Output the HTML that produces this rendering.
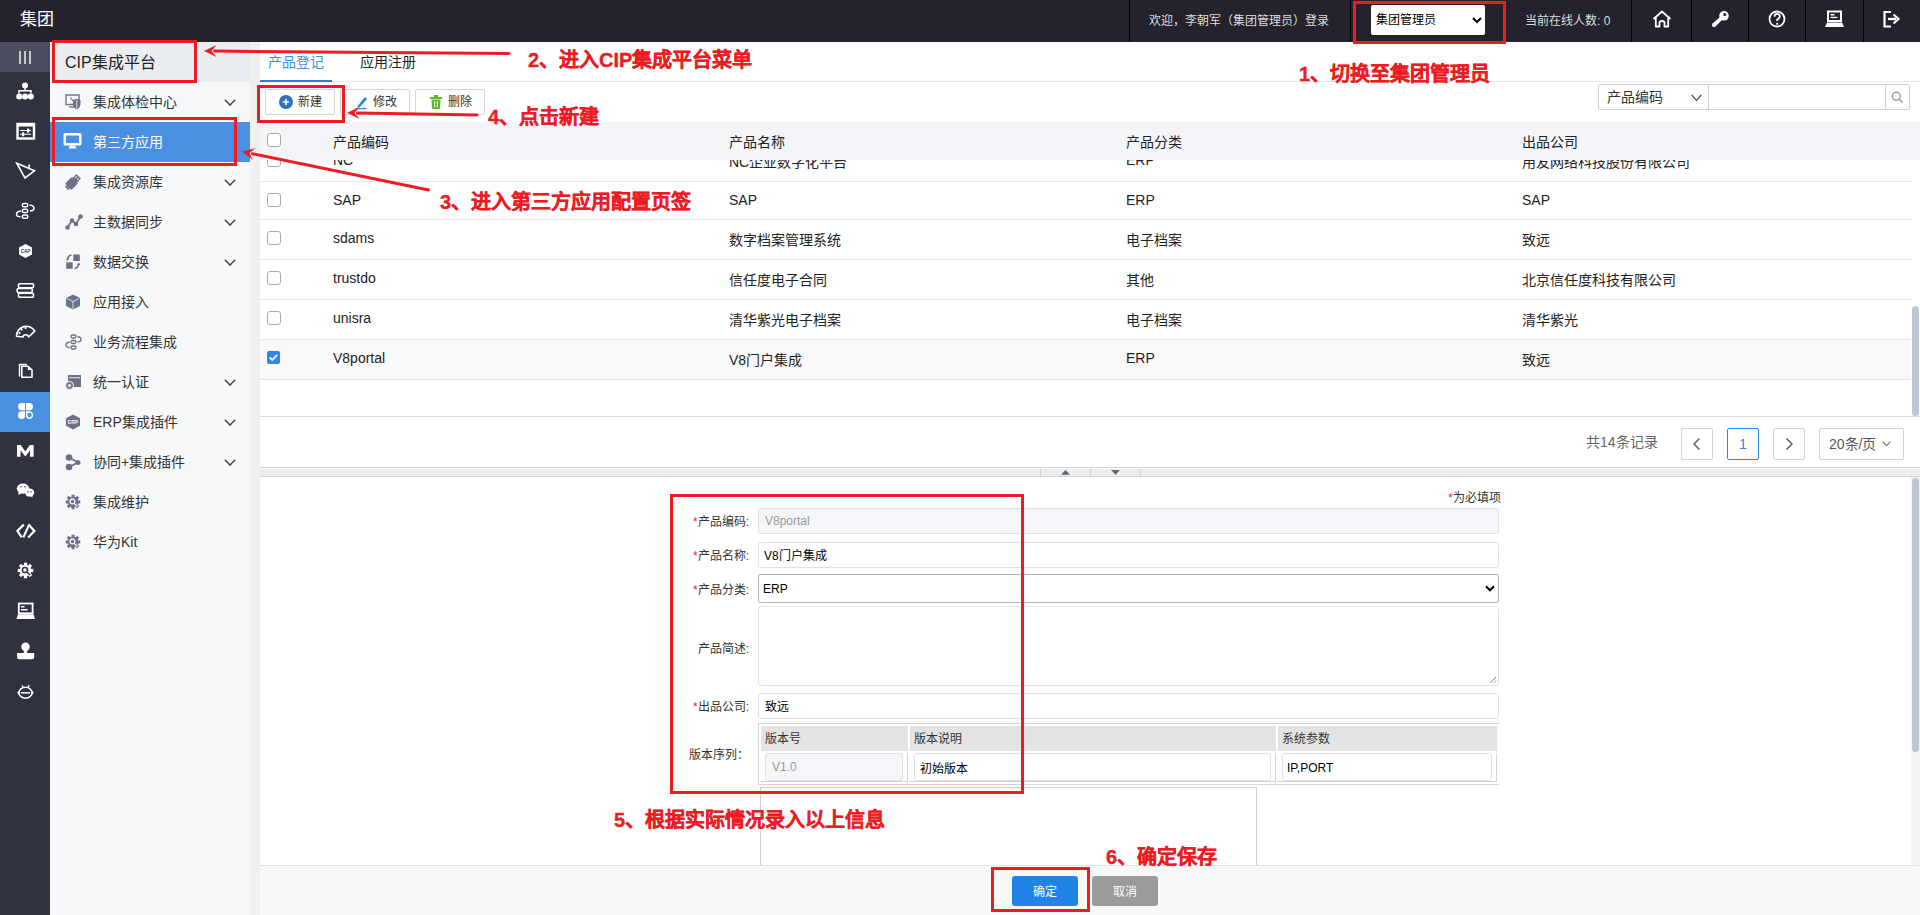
<!DOCTYPE html>
<html lang="zh-CN"><head><meta charset="utf-8">
<style>
*{box-sizing:border-box;margin:0;padding:0}
html,body{width:1920px;height:915px;overflow:hidden;background:#fff;font-family:"Liberation Sans",sans-serif;color:#333;position:relative}
.abs{position:absolute}
.t{position:absolute;white-space:nowrap;line-height:1}
#top{left:0;top:0;width:1920px;height:42px;background:#23222d}
#rail{left:0;top:42px;width:50px;height:873px;background:#30333f}
#side{left:50px;top:42px;width:200px;height:873px;background:#f7f8fa}
#strip{left:250px;top:42px;width:10px;height:873px;background:#f0f0f0}
.vsep{position:absolute;top:0;width:1px;height:42px;background:#000}
.red{color:#ed1c24;font-weight:bold;font-size:20px;-webkit-text-stroke:0.35px #ed1c24}
</style></head><body>
<div id="strip" class="abs"></div>
<div id="top" class="abs">
  <div class="t" style="left:20px;top:11px;font-size:17px;color:#fff">集团</div>
  <div class="vsep" style="left:1129px"></div>
  <div class="t" style="left:1149px;top:15px;font-size:12px;color:#ddd">欢迎，李朝军（集团管理员）登录</div>
  <div class="vsep" style="left:1350px"></div>
  <div class="abs" style="left:1371px;top:5px;width:114px;height:30px;background:#fff;border-radius:2px">
    <div class="t" style="left:5px;top:9px;font-size:12px;color:#000">集团管理员</div>
    <svg class="abs" style="left:101px;top:12px" width="10" height="7" viewBox="0 0 10 7"><path d="M1 1 L5 5 L9 1" fill="none" stroke="#000" stroke-width="2"/></svg>
  </div>
  <div class="t" style="left:1525px;top:15px;font-size:12px;color:#ddd">当前在线人数: 0</div>
  <div class="vsep" style="left:1631px"></div>
  <div class="vsep" style="left:1691px"></div>
  <div class="vsep" style="left:1748px"></div>
  <div class="vsep" style="left:1805px"></div>
  <div class="vsep" style="left:1863px"></div>
  <svg class="abs" style="left:0;top:0" width="1920" height="42">
    <g fill="none" stroke="#fff" stroke-width="1.8" stroke-linejoin="round">
      <!-- home -->
      <path d="M1653.5 19 L1662 11.5 L1670.5 19"/>
      <path d="M1655.8 17.5 V26.5 H1659.5 V22 Q1662 20 1664.5 22 V26.5 H1668.2 V17.5"/>
      <!-- help -->
      <circle cx="1777" cy="19" r="7.5"/>
      <path d="M1774.5 16.8 Q1774.5 13.8 1777 13.8 Q1779.8 13.8 1779.8 16.5 Q1779.8 18.2 1777.2 19.5 V21" stroke-width="1.8"/>
    </g>
    <circle cx="1777.2" cy="23.8" r="1.1" fill="#fff"/>
    <!-- key -->
    <g fill="#fff">
      <circle cx="1724" cy="15.8" r="4.8"/>
      <path d="M1720 17 L1722.5 19.5 L1715.5 26.5 Q1713.5 27.5 1712.5 26.5 Q1711.5 25.5 1712.5 23.5 Z"/>
    </g>
    <circle cx="1724.8" cy="14.5" r="1.5" fill="#23222d"/>
    <!-- monitor/laptop -->
    <path d="M1828 11.5 H1841 V21 H1828 Z" fill="none" stroke="#fff" stroke-width="2"/>
    <rect x="1830.5" y="14" width="4" height="1.5" fill="#fff"/>
    <rect x="1830.5" y="16.8" width="7" height="1.3" fill="#fff"/>
    <path d="M1827 22.5 H1842 L1844 27 H1825 Z" fill="#fff"/>
    <!-- logout -->
    <path d="M1891 12 H1884.5 V26.5 H1891" fill="none" stroke="#fff" stroke-width="2.2"/>
    <path d="M1888 19 H1896" stroke="#fff" stroke-width="2.4"/>
    <path d="M1893.5 14.5 L1898.5 19 L1893.5 23.5" fill="none" stroke="#fff" stroke-width="2.2"/>
  </svg>
</div>

<div id="rail" class="abs">
  <div class="abs" style="left:0;top:0;width:50px;height:30px;background:#4a4e5f"></div>
  <div class="abs" style="left:0;top:350px;width:50px;height:40px;background:#4a90e2"></div>
</div>
<svg class="abs" style="left:0;top:0" width="50" height="915">
  <!-- III -->
  <g fill="#c4c9d0"><rect x="19" y="51" width="2" height="13"/><rect x="24" y="51" width="2" height="13"/><rect x="29" y="51" width="2" height="13"/></g>
  <g fill="#fff" stroke="none">
  <!-- org chart -->
  <circle cx="25" cy="85.5" r="3"/>
  <circle cx="19.2" cy="96.6" r="3"/><circle cx="25" cy="96.6" r="3"/><circle cx="30.8" cy="96.6" r="3"/>
  </g>
  <path d="M25 88 V91 M19 93.5 V90.8 H31 V93.5" fill="none" stroke="#fff" stroke-width="1.4"/>
  <!-- sliders box -->
  <rect x="17.5" y="124" width="16.5" height="14.5" fill="none" stroke="#fff" stroke-width="2.4"/>
  <rect x="17" y="123" width="17.5" height="3.5" fill="#fff"/>
  <path d="M20 130.5 H31 M20 134.3 H31" stroke="#fff" stroke-width="1.1"/>
  <rect x="27" y="128.5" width="2.2" height="4" fill="#fff"/>
  <rect x="22" y="132.3" width="2.2" height="4" fill="#fff"/>
  <!-- send triangle -->
  <path d="M16.8 163.3 L34.5 170.8 L25 178 Z" fill="none" stroke="#fff" stroke-width="1.6" stroke-linejoin="miter"/>
  <path d="M29.5 164.5 L28.5 168.6" fill="none" stroke="#fff" stroke-width="1.5"/>
  <!-- flow -->
  <g fill="none" stroke="#fff" stroke-width="1.5">
    <rect x="22.3" y="203.5" width="5.5" height="3.3" rx="1.6"/>
    <rect x="22.3" y="209.3" width="5.5" height="3.3" rx="1.6"/>
    <rect x="22.3" y="215" width="5.5" height="3.3" rx="1.6"/>
    <path d="M29.5 205 Q34 205.5 34 208.3 Q34 211 30 211"/>
    <path d="M21 211 Q16.5 211.5 16.5 214 Q16.5 216.8 20.5 216.8"/>
  </g>
  <!-- CAP hex -->
  <path d="M25.5 244 L32 247.5 V254.5 L25.5 258 L19 254.5 V247.5 Z" fill="#fff"/>
  <text x="25.5" y="253" font-size="4.5" font-family="Liberation Sans" font-weight="bold" fill="#30333f" text-anchor="middle">CAP</text>
  <!-- database -->
  <g fill="none" stroke="#fff" stroke-width="1.6">
    <rect x="18.5" y="283.8" width="15" height="4" rx="1"/>
    <rect x="17.2" y="288.5" width="15" height="4" rx="1"/>
    <rect x="18.5" y="293.2" width="15" height="4" rx="1"/>
  </g>
  <!-- gauge -->
  <path d="M16.5 336.3 A9.8 9.8 0 0 1 34.8 331.2 L28.6 337 A3 3 0 0 0 22.8 337 Z" fill="none" stroke="#fff" stroke-width="1.6" stroke-linejoin="round"/>
  <g fill="#fff"><circle cx="21.6" cy="329.6" r="1.1"/><circle cx="25.6" cy="327.9" r="1.1"/><circle cx="19.5" cy="333" r="1.1"/></g>
  <!-- documents -->
  <path d="M19.5 376.5 V364.5 H27" fill="none" stroke="#fff" stroke-width="1.4"/>
  <path d="M21.8 366.2 H27.8 L32 370 V377.2 H21.8 Z" fill="none" stroke="#fff" stroke-width="1.6" stroke-linejoin="round"/>
  <path d="M27.8 366.2 V370 H32" fill="#fff"/>
  <!-- clover -->
  <g fill="#fff">
    <path d="M25 403 H21.5 A3.5 3.5 0 0 0 18 406.5 A3.8 3.8 0 0 0 21.7 410.3 H25 Z"/>
    <path d="M26 403 H29.5 A3.5 3.5 0 0 1 33 406.5 A3.8 3.8 0 0 1 29.3 410.3 H26 Z"/>
    <path d="M25 411.3 H21.7 A3.8 3.8 0 0 0 18 415.2 A3.7 3.7 0 0 0 21.7 419 A3.3 3.3 0 0 0 25 415.7 Z"/>
  </g>
  <path d="M26.8 412 H29.6 A2.9 2.9 0 0 1 32.4 415 A3.1 3.1 0 0 1 29.4 418.2 A2.6 2.6 0 0 1 26.8 415.6 Z" fill="none" stroke="#fff" stroke-width="1.5"/>
  <!-- M -->
  <path d="M17 456.7 V445 H20.8 L25.3 451.5 L29.8 445 H33.6 V456.7 H30 V450.5 L25.3 456.5 L20.6 450.5 V456.7 Z" fill="#fff"/>
  <!-- chat -->
  <g fill="#fff">
    <ellipse cx="23" cy="488.6" rx="6.2" ry="5.1"/>
    <path d="M18.5 492 L18.3 495 L21.5 493.2 Z"/>
    <ellipse cx="29.6" cy="492.6" rx="4.6" ry="4"/>
    <path d="M32 495.5 L32.8 497.5 L30 496 Z"/>
  </g>
  <g fill="#30333f"><circle cx="21" cy="486.8" r=".8"/><circle cx="25" cy="486.8" r=".8"/><circle cx="28" cy="491.8" r=".7"/><circle cx="31" cy="491.8" r=".7"/></g>
  <path d="M29.8 491" fill="none"/>
  <!-- code </> -->
  <g fill="none" stroke="#fff" stroke-width="2.2" stroke-linejoin="miter">
    <path d="M23.8 524.6 L17.4 531 L21.8 537.4"/>
    <path d="M29.2 524.6 L23.3 537.4"/>
    <path d="M28.6 524.6 L34.4 531 L28.2 537.4"/>
  </g>
  <!-- gear -->
  <g transform="translate(25.5 570.5)">
    <circle r="5.8" fill="#fff"/>
    <g fill="#fff">
      <rect x="-1.6" y="-7.8" width="3.2" height="15.6"/>
      <rect x="-1.6" y="-7.8" width="3.2" height="15.6" transform="rotate(45)"/>
      <rect x="-1.6" y="-7.8" width="3.2" height="15.6" transform="rotate(90)"/>
      <rect x="-1.6" y="-7.8" width="3.2" height="15.6" transform="rotate(135)"/>
    </g>
    <circle cx="-0.5" cy="-0.5" r="2.6" fill="none" stroke="#30333f" stroke-width="1.5"/>
    <path d="M1.5 1.5 L4.5 4.5" stroke="#30333f" stroke-width="1.5"/>
  </g>
  <!-- laptop -->
  <rect x="18.8" y="603.5" width="13.8" height="9.8" fill="none" stroke="#fff" stroke-width="1.8"/>
  <rect x="21" y="606" width="3.5" height="1.5" fill="#fff"/>
  <rect x="21" y="609" width="6.5" height="1.5" fill="#fff"/>
  <path d="M18 614.3 H33.5 L35 619 H16.5 Z" fill="#fff"/>
  <!-- stamp -->
  <g fill="#fff">
    <circle cx="25.5" cy="646.8" r="4.3"/>
    <rect x="23.8" y="649" width="3.4" height="4.5"/>
    <path d="M17 653 H34.2 V657 Q34 659.2 32 659.2 H19.2 Q17 659.2 17 657 Z"/>
  </g>
  <!-- robot -->
  <g fill="none" stroke="#fff" stroke-width="1.5">
    <ellipse cx="25.5" cy="692.8" rx="6.5" ry="5.5"/>
    <path d="M21 692.8 H30"/>
    <path d="M23 687.8 L22.3 685.5 M28 687.8 L29 685.2"/>
  </g>
  <path d="M17.2 692.8 L19 690.5 V695 Z M33.8 692.8 L32 690.5 V695 Z" fill="#fff"/>
</svg>

<div id="side" class="abs">
<div class="abs" style="left:0;top:0;width:200px;height:40px;background:#e9ecf1"></div>
<div class="t" style="left:15px;top:13px;font-size:16px;color:#222">CIP集成平台</div>
<div class="abs" style="left:0;top:80px;width:200px;height:40px;background:#4a90e2"></div>
<svg class="abs" style="left:15px;top:52px" width="17" height="17" overflow="visible"><rect x="1" y="1" width="13" height="9.5" fill="none" stroke="#6b7186" stroke-width="1.4"/><path d="M4 13 H9" stroke="#6b7186" stroke-width="1.4"/><path d="M8 6 Q12 4 15.5 6 V10.5 Q15 14 11.8 15.5 Q8.5 14 8 10.5 Z" fill="#6b7186"/><path d="M11.8 6 V15" stroke="#f7f8fa" stroke-width=".8"/><path d="M5.5 3.5 L8 7" stroke="#6b7186" stroke-width="1.2"/></svg>
<div class="t" style="left:43px;top:53px;font-size:14px;color:#333">集成体检中心</div>
<svg class="abs" style="left:174px;top:57px" width="12" height="8"><path d="M0.8 0.8 L6 6 L11.2 0.8" fill="none" stroke="#333" stroke-width="1.3"/></svg>
<svg class="abs" style="left:13px;top:91px" width="19" height="16"><path d="M0.5 2 Q0.5 0 2.5 0 H16.5 Q18.5 0 18.5 2 V11 Q18.5 12.6 16.5 12.6 H2.5 Q0.5 12.6 0.5 11 Z" fill="#fff"/><rect x="3" y="2.5" width="13" height="7.6" fill="#4a90e2"/><path d="M7 12.5 H12 L13.5 15.5 H5.5 Z" fill="#fff"/></svg>
<div class="t" style="left:43px;top:93px;font-size:14px;color:#fff">第三方应用</div>
<svg class="abs" style="left:15px;top:132px" width="17" height="17" overflow="visible"><g transform="rotate(45 8 8)"><rect x="3.5" y="5" width="9" height="10" rx="1.5" fill="#6b7186"/><rect x="4.8" y="0" width="6.4" height="5.5" fill="#6b7186"/><rect x="6" y="1.5" width="1.2" height="1.8" fill="#f7f8fa"/><rect x="8.8" y="1.5" width="1.2" height="1.8" fill="#f7f8fa"/><path d="M6 15 L5 17 H11 L10 15 Z" fill="#6b7186"/></g></svg>
<div class="t" style="left:43px;top:133px;font-size:14px;color:#333">集成资源库</div>
<svg class="abs" style="left:174px;top:137px" width="12" height="8"><path d="M0.8 0.8 L6 6 L11.2 0.8" fill="none" stroke="#333" stroke-width="1.3"/></svg>
<svg class="abs" style="left:15px;top:172px" width="17" height="17" overflow="visible"><path d="M2.5 13.5 L7 6.5 L11 10 L15.5 2.5" fill="none" stroke="#6b7186" stroke-width="1.8"/><circle cx="2.5" cy="13.5" r="2.3" fill="#6b7186"/><circle cx="7" cy="6.5" r="2.3" fill="#6b7186"/><circle cx="11" cy="10" r="2.3" fill="#6b7186"/><circle cx="15.5" cy="2.5" r="2.3" fill="#6b7186"/></svg>
<div class="t" style="left:43px;top:173px;font-size:14px;color:#333">主数据同步</div>
<svg class="abs" style="left:174px;top:177px" width="12" height="8"><path d="M0.8 0.8 L6 6 L11.2 0.8" fill="none" stroke="#333" stroke-width="1.3"/></svg>
<svg class="abs" style="left:15px;top:212px" width="17" height="17" overflow="visible"><rect x="8.3" y="0.5" width="6.5" height="6.5" fill="#6b7186"/><rect x="1.2" y="8.3" width="6.5" height="6.5" fill="#6b7186"/><path d="M6.5 1 Q3 1.5 2.5 5.5" fill="none" stroke="#6b7186" stroke-width="1.5"/><path d="M1 4.5 L2.5 7 L4.3 4.5 Z" fill="#6b7186"/><path d="M9.5 14.5 Q13 14 13.8 10" fill="none" stroke="#6b7186" stroke-width="1.5"/><path d="M12 11 L13.8 8.5 L15.5 11 Z" fill="#6b7186"/></svg>
<div class="t" style="left:43px;top:213px;font-size:14px;color:#333">数据交换</div>
<svg class="abs" style="left:174px;top:217px" width="12" height="8"><path d="M0.8 0.8 L6 6 L11.2 0.8" fill="none" stroke="#333" stroke-width="1.3"/></svg>
<svg class="abs" style="left:15px;top:252px" width="17" height="17" overflow="visible"><path d="M8 0.5 L15 4 V12 L8 15.5 L1 12 V4 Z" fill="#6b7186"/><path d="M1.5 4.3 L8 7.6 L14.5 4.3 M8 7.6 V15.2" fill="none" stroke="#f7f8fa" stroke-width=".8"/></svg>
<div class="t" style="left:43px;top:253px;font-size:14px;color:#333">应用接入</div>
<svg class="abs" style="left:15px;top:292px" width="17" height="17" overflow="visible"><g fill="none" stroke="#6b7186" stroke-width="1.3"><rect x="6" y="1" width="5" height="3" rx="1.5"/><rect x="6" y="6.5" width="5" height="3" rx="1.5"/><rect x="6" y="12" width="5" height="3" rx="1.5"/><path d="M12.5 2.5 Q16 3 16 5.5 Q16 8 12.5 8"/><path d="M4.5 8 Q1 8.5 1 11 Q1 13.5 4.5 13.5"/></g></svg>
<div class="t" style="left:43px;top:293px;font-size:14px;color:#333">业务流程集成</div>
<svg class="abs" style="left:15px;top:332px" width="17" height="17" overflow="visible"><path d="M3 1 H16 V13 H8" fill="#6b7186"/><rect x="3" y="1" width="13" height="12" fill="#6b7186"/><rect x="4" y="3.3" width="11" height=".9" fill="#f7f8fa"/><circle cx="4.5" cy="11.5" r="4" fill="#6b7186" stroke="#f7f8fa" stroke-width="1"/><circle cx="4.5" cy="11.5" r="1.5" fill="#f7f8fa"/></svg>
<div class="t" style="left:43px;top:333px;font-size:14px;color:#333">统一认证</div>
<svg class="abs" style="left:174px;top:337px" width="12" height="8"><path d="M0.8 0.8 L6 6 L11.2 0.8" fill="none" stroke="#333" stroke-width="1.3"/></svg>
<svg class="abs" style="left:15px;top:372px" width="17" height="17" overflow="visible"><path d="M8 0.5 L15 4.2 V11.8 L8 15.5 L1 11.8 V4.2 Z" fill="#6b7186"/><text x="8" y="10.2" font-size="5" font-family="Liberation Sans" font-weight="bold" fill="#f7f8fa" text-anchor="middle">ERP</text></svg>
<div class="t" style="left:43px;top:373px;font-size:14px;color:#333">ERP集成插件</div>
<svg class="abs" style="left:174px;top:377px" width="12" height="8"><path d="M0.8 0.8 L6 6 L11.2 0.8" fill="none" stroke="#333" stroke-width="1.3"/></svg>
<svg class="abs" style="left:15px;top:412px" width="17" height="17" overflow="visible"><path d="M4 3.5 L13 8.5 L4 13" fill="none" stroke="#6b7186" stroke-width="1.8"/><circle cx="4" cy="3.5" r="3.3" fill="#6b7186"/><circle cx="4" cy="13" r="3.3" fill="#6b7186"/><circle cx="13" cy="8.5" r="2.5" fill="#6b7186"/></svg>
<div class="t" style="left:43px;top:413px;font-size:14px;color:#333">协同+集成插件</div>
<svg class="abs" style="left:174px;top:417px" width="12" height="8"><path d="M0.8 0.8 L6 6 L11.2 0.8" fill="none" stroke="#333" stroke-width="1.3"/></svg>
<svg class="abs" style="left:15px;top:452px" width="17" height="17" overflow="visible"><g transform="translate(8 8)"><circle r="5.3" fill="#6b7186"/><g fill="#6b7186"><rect x="-1.5" y="-7.3" width="3" height="14.6"/><rect x="-1.5" y="-7.3" width="3" height="14.6" transform="rotate(45)"/><rect x="-1.5" y="-7.3" width="3" height="14.6" transform="rotate(90)"/><rect x="-1.5" y="-7.3" width="3" height="14.6" transform="rotate(135)"/></g><circle cx="-0.6" cy="-0.6" r="2.4" fill="none" stroke="#f7f8fa" stroke-width="1.3"/><path d="M1.2 1.2 L4.2 4.2" stroke="#f7f8fa" stroke-width="1.4"/></g></svg>
<div class="t" style="left:43px;top:453px;font-size:14px;color:#333">集成维护</div>
<svg class="abs" style="left:15px;top:492px" width="17" height="17" overflow="visible"><g transform="translate(8 8)"><circle r="5.3" fill="#6b7186"/><g fill="#6b7186"><rect x="-1.5" y="-7.3" width="3" height="14.6"/><rect x="-1.5" y="-7.3" width="3" height="14.6" transform="rotate(45)"/><rect x="-1.5" y="-7.3" width="3" height="14.6" transform="rotate(90)"/><rect x="-1.5" y="-7.3" width="3" height="14.6" transform="rotate(135)"/></g><circle cx="-0.6" cy="-0.6" r="2.4" fill="none" stroke="#f7f8fa" stroke-width="1.3"/><path d="M1.2 1.2 L4.2 4.2" stroke="#f7f8fa" stroke-width="1.4"/></g></svg>
<div class="t" style="left:43px;top:493px;font-size:14px;color:#333">华为Kit</div>
</div>
<div class="abs" style="left:260px;top:81px;width:1660px;height:1px;background:#e4e6ea"></div>
<div class="t" style="left:268px;top:55px;font-size:14px;color:#3a8ee6">产品登记</div>
<div class="abs" style="left:260px;top:80px;width:72px;height:2px;background:#1e7fe0"></div>
<div class="t" style="left:360px;top:55px;font-size:14px;color:#222">应用注册</div>
<div class="abs" style="left:265px;top:89px;width:70px;height:26px;border:1px solid #d4d4d4;border-radius:2px;background:#fff"></div>
<div class="t" style="left:298px;top:96px;font-size:12px;color:#333">新建</div>
<div class="abs" style="left:340px;top:89px;width:70px;height:26px;border:1px solid #d4d4d4;border-radius:2px;background:#fff"></div>
<div class="t" style="left:373px;top:96px;font-size:12px;color:#333">修改</div>
<div class="abs" style="left:415px;top:89px;width:70px;height:26px;border:1px solid #d4d4d4;border-radius:2px;background:#fff"></div>
<div class="t" style="left:448px;top:96px;font-size:12px;color:#333">删除</div>
<svg class="abs" style="left:279px;top:95px" width="14" height="14"><circle cx="7" cy="7" r="7" fill="#2f6fc0"/><path d="M7 3.8 V10.2 M3.8 7 H10.2" stroke="#fff" stroke-width="1.6"/></svg>
<svg class="abs" style="left:354px;top:94px" width="14" height="16"><path d="M4 11.5 L11 3 L13 5 L6 13 L3.5 13.5 Z" fill="#2a86e6"/><rect x="1.5" y="14" width="11" height="1.3" fill="#2a86e6"/></svg>
<svg class="abs" style="left:429px;top:94px" width="14" height="16"><rect x="1" y="3" width="12" height="2" fill="#5cbd2a"/><rect x="5" y="1" width="4" height="2" fill="#5cbd2a"/><path d="M2.5 5.5 H11.5 L11 15 H3 Z" fill="#5cbd2a"/><rect x="5" y="7.5" width="1.2" height="5.5" fill="#fff"/><rect x="7.8" y="7.5" width="1.2" height="5.5" fill="#fff"/></svg>
<div class="abs" style="left:1598px;top:84px;width:312px;height:26px;border:1px solid #d0d0d0;border-radius:2px;background:#fff"></div>
<div class="abs" style="left:1708px;top:84px;width:1px;height:26px;background:#d0d0d0"></div>
<div class="abs" style="left:1885px;top:84px;width:1px;height:26px;background:#d0d0d0"></div>
<div class="t" style="left:1607px;top:90px;font-size:14px;color:#333">产品编码</div>
<svg class="abs" style="left:1691px;top:94px" width="11" height="8"><path d="M0.7 0.8 L5.5 6.5 L10.3 0.8" fill="none" stroke="#333" stroke-width="1.1"/></svg>
<svg class="abs" style="left:1891px;top:91px" width="13" height="13"><circle cx="5.3" cy="5.3" r="4" fill="none" stroke="#999" stroke-width="1.4"/><path d="M8.2 8.2 L11.5 11.5" stroke="#999" stroke-width="1.6"/></svg>
<div class="abs" style="left:260px;top:122px;width:1660px;height:38px;background:#f4f5f9"></div>
<div class="abs" style="left:267px;top:133px;width:14px;height:14px;border:1px solid #a9a9a9;border-radius:3px;background:#fff"></div>
<div class="t" style="left:333px;top:135px;font-size:14px;color:#222">产品编码</div>
<div class="t" style="left:729px;top:135px;font-size:14px;color:#222">产品名称</div>
<div class="t" style="left:1126px;top:135px;font-size:14px;color:#222">产品分类</div>
<div class="t" style="left:1522px;top:135px;font-size:14px;color:#222">出品公司</div>
<div class="abs" style="left:260px;top:160px;width:1660px;height:256px;overflow:hidden">
<div class="abs" style="left:0;top:180px;width:1651px;height:40px;background:#f9f9f9"></div>
<div class="abs" style="left:7px;top:-7px;width:14px;height:14px;border:1px solid #a9a9a9;border-radius:3px;background:#fff"></div>
<div class="t" style="left:73px;top:-7px;font-size:14px;color:#222">NC</div>
<div class="t" style="left:469px;top:-5px;font-size:14px;color:#222">NC企业数字化平台</div>
<div class="t" style="left:866px;top:-7px;font-size:14px;color:#222">ERP</div>
<div class="t" style="left:1262px;top:-5px;font-size:14px;color:#222">用友网络科技股份有限公司</div>
<div class="abs" style="left:0;top:21px;width:1651px;height:1px;background:#e6e6e6"></div>
<div class="abs" style="left:66px;top:21px;width:1px;height:1px;background:#fff"></div>
<div class="abs" style="left:462px;top:21px;width:1px;height:1px;background:#fff"></div>
<div class="abs" style="left:858px;top:21px;width:1px;height:1px;background:#fff"></div>
<div class="abs" style="left:1254px;top:21px;width:1px;height:1px;background:#fff"></div>
<div class="abs" style="left:7px;top:33px;width:14px;height:14px;border:1px solid #a9a9a9;border-radius:3px;background:#fff"></div>
<div class="t" style="left:73px;top:33px;font-size:14px;color:#222">SAP</div>
<div class="t" style="left:469px;top:33px;font-size:14px;color:#222">SAP</div>
<div class="t" style="left:866px;top:33px;font-size:14px;color:#222">ERP</div>
<div class="t" style="left:1262px;top:33px;font-size:14px;color:#222">SAP</div>
<div class="abs" style="left:0;top:59px;width:1651px;height:1px;background:#e6e6e6"></div>
<div class="abs" style="left:66px;top:59px;width:1px;height:1px;background:#fff"></div>
<div class="abs" style="left:462px;top:59px;width:1px;height:1px;background:#fff"></div>
<div class="abs" style="left:858px;top:59px;width:1px;height:1px;background:#fff"></div>
<div class="abs" style="left:1254px;top:59px;width:1px;height:1px;background:#fff"></div>
<div class="abs" style="left:7px;top:71px;width:14px;height:14px;border:1px solid #a9a9a9;border-radius:3px;background:#fff"></div>
<div class="t" style="left:73px;top:71px;font-size:14px;color:#222">sdams</div>
<div class="t" style="left:469px;top:73px;font-size:14px;color:#222">数字档案管理系统</div>
<div class="t" style="left:866px;top:73px;font-size:14px;color:#222">电子档案</div>
<div class="t" style="left:1262px;top:73px;font-size:14px;color:#222">致远</div>
<div class="abs" style="left:0;top:99px;width:1651px;height:1px;background:#e6e6e6"></div>
<div class="abs" style="left:66px;top:99px;width:1px;height:1px;background:#fff"></div>
<div class="abs" style="left:462px;top:99px;width:1px;height:1px;background:#fff"></div>
<div class="abs" style="left:858px;top:99px;width:1px;height:1px;background:#fff"></div>
<div class="abs" style="left:1254px;top:99px;width:1px;height:1px;background:#fff"></div>
<div class="abs" style="left:7px;top:111px;width:14px;height:14px;border:1px solid #a9a9a9;border-radius:3px;background:#fff"></div>
<div class="t" style="left:73px;top:111px;font-size:14px;color:#222">trustdo</div>
<div class="t" style="left:469px;top:113px;font-size:14px;color:#222">信任度电子合同</div>
<div class="t" style="left:866px;top:113px;font-size:14px;color:#222">其他</div>
<div class="t" style="left:1262px;top:113px;font-size:14px;color:#222">北京信任度科技有限公司</div>
<div class="abs" style="left:0;top:139px;width:1651px;height:1px;background:#e6e6e6"></div>
<div class="abs" style="left:66px;top:139px;width:1px;height:1px;background:#fff"></div>
<div class="abs" style="left:462px;top:139px;width:1px;height:1px;background:#fff"></div>
<div class="abs" style="left:858px;top:139px;width:1px;height:1px;background:#fff"></div>
<div class="abs" style="left:1254px;top:139px;width:1px;height:1px;background:#fff"></div>
<div class="abs" style="left:7px;top:151px;width:14px;height:14px;border:1px solid #a9a9a9;border-radius:3px;background:#fff"></div>
<div class="t" style="left:73px;top:151px;font-size:14px;color:#222">unisra</div>
<div class="t" style="left:469px;top:153px;font-size:14px;color:#222">清华紫光电子档案</div>
<div class="t" style="left:866px;top:153px;font-size:14px;color:#222">电子档案</div>
<div class="t" style="left:1262px;top:153px;font-size:14px;color:#222">清华紫光</div>
<div class="abs" style="left:0;top:179px;width:1651px;height:1px;background:#e6e6e6"></div>
<div class="abs" style="left:66px;top:179px;width:1px;height:1px;background:#fff"></div>
<div class="abs" style="left:462px;top:179px;width:1px;height:1px;background:#fff"></div>
<div class="abs" style="left:858px;top:179px;width:1px;height:1px;background:#fff"></div>
<div class="abs" style="left:1254px;top:179px;width:1px;height:1px;background:#fff"></div>
<div class="abs" style="left:7px;top:191px;width:13px;height:13px;border-radius:2px;background:#2e86e8"><svg class="abs" style="left:0;top:0" width="13" height="13"><path d="M2.8 6.5 L5.3 9 L10.2 3.8" fill="none" stroke="#fff" stroke-width="1.8"/></svg></div>
<div class="t" style="left:73px;top:191px;font-size:14px;color:#222">V8portal</div>
<div class="t" style="left:469px;top:193px;font-size:14px;color:#222">V8门户集成</div>
<div class="t" style="left:866px;top:191px;font-size:14px;color:#222">ERP</div>
<div class="t" style="left:1262px;top:193px;font-size:14px;color:#222">致远</div>
<div class="abs" style="left:0;top:219px;width:1651px;height:1px;background:#e6e6e6"></div>
</div>
<div class="abs" style="left:1912px;top:306px;width:7px;height:110px;border-radius:4px;background:#bdc6d3"></div>
<div class="abs" style="left:260px;top:416px;width:1660px;height:1px;background:#dcdcdc"></div>
<div class="t" style="left:1586px;top:435px;font-size:14px;color:#666">共14条记录</div>
<div class="abs" style="left:1681px;top:428px;width:32px;height:32px;border:1px solid #d4d4d4;border-radius:2px;background:#fff"></div>
<div class="abs" style="left:1727px;top:428px;width:32px;height:32px;border:1px solid #2f86e9;border-radius:2px;background:#fff"></div>
<div class="abs" style="left:1773px;top:428px;width:32px;height:32px;border:1px solid #d4d4d4;border-radius:2px;background:#fff"></div>
<svg class="abs" style="left:1691px;top:437px" width="12" height="14"><path d="M8.5 1.5 L3 7 L8.5 12.5" fill="none" stroke="#555" stroke-width="1.4"/></svg>
<div class="t" style="left:1739px;top:437px;font-size:14px;color:#2f86e9">1</div>
<svg class="abs" style="left:1783px;top:437px" width="12" height="14"><path d="M3.5 1.5 L9 7 L3.5 12.5" fill="none" stroke="#555" stroke-width="1.4"/></svg>
<div class="abs" style="left:1819px;top:428px;width:85px;height:32px;border:1px solid #d4d4d4;border-radius:2px;background:#fff"></div>
<div class="t" style="left:1829px;top:437px;font-size:14px;color:#555">20条/页</div>
<svg class="abs" style="left:1882px;top:441px" width="9" height="6"><path d="M0.6 0.6 L4.5 4.8 L8.4 0.6" fill="none" stroke="#666" stroke-width="1.1"/></svg>
<div class="abs" style="left:260px;top:467px;width:1660px;height:10px;background:#ededed;border-top:1px solid #d2d2d2;border-bottom:1px solid #d2d2d2"></div>
<div class="abs" style="left:260px;top:468px;width:1660px;height:1px;background:#fafafa"></div>
<div class="abs" style="left:1040px;top:469px;width:1px;height:7px;background:#d2d2d2"></div>
<div class="abs" style="left:1090px;top:469px;width:1px;height:7px;background:#d2d2d2"></div>
<div class="abs" style="left:1140px;top:469px;width:1px;height:7px;background:#d2d2d2"></div>
<svg class="abs" style="left:1060px;top:469px" width="12" height="7"><path d="M1 5.8 L5.5 1 L10 5.8 Z" fill="#5a6a85"/></svg>
<svg class="abs" style="left:1110px;top:469px" width="12" height="7"><path d="M1 1 L10 1 L5.5 6 Z" fill="#5a6a85"/></svg>
<div class="t" style="right:419px;top:492px;font-size:12px;color:#333"><span style="color:#ed1c24">*</span>为必填项</div>
<div class="t" style="right:1171px;top:516px;font-size:12px;color:#333;text-align:right"><span style="color:#ed1c24">*</span>产品编码:</div>
<div class="abs" style="left:758px;top:508px;width:741px;height:26px;border:1px solid #dde1e8;border-radius:3px;background:#f4f6fa"></div>
<div class="t" style="left:765px;top:515px;font-size:12px;color:#999">V8portal</div>
<div class="t" style="right:1171px;top:550px;font-size:12px;color:#333;text-align:right"><span style="color:#ed1c24">*</span>产品名称:</div>
<div class="abs" style="left:758px;top:542px;width:741px;height:26px;border:1px solid #dde1e8;border-radius:3px;background:#fff"></div>
<div class="t" style="left:764px;top:550px;font-size:12px;color:#000">V8门户集成</div>
<div class="t" style="right:1171px;top:584px;font-size:12px;color:#333;text-align:right"><span style="color:#ed1c24">*</span>产品分类:</div>
<div class="abs" style="left:758px;top:574px;width:741px;height:29px;border:1px solid #b4b4b4;border-radius:2px;background:#fff"></div>
<div class="t" style="left:763px;top:583px;font-size:12px;color:#000">ERP</div>
<svg class="abs" style="left:1485px;top:585px" width="10" height="8"><path d="M1 1.2 L5 5.3 L9 1.2" fill="none" stroke="#000" stroke-width="2"/></svg>
<div class="t" style="right:1171px;top:643px;font-size:12px;color:#333;text-align:right">产品简述:</div>
<div class="abs" style="left:758px;top:606px;width:741px;height:80px;border:1px solid #dde1e8;border-radius:3px;background:#fff"></div>
<svg class="abs" style="left:1488px;top:675px" width="9" height="9"><path d="M8 2 L2 8 M8 5.5 L5.5 8" stroke="#888" stroke-width="1"/></svg>
<div class="t" style="right:1171px;top:701px;font-size:12px;color:#333;text-align:right"><span style="color:#ed1c24">*</span>出品公司:</div>
<div class="abs" style="left:758px;top:693px;width:741px;height:26px;border:1px solid #dde1e8;border-radius:3px;background:#fff"></div>
<div class="t" style="left:765px;top:701px;font-size:12px;color:#000">致远</div>
<div class="t" style="right:1171px;top:749px;font-size:12px;color:#333;text-align:right">版本序列：</div>
<div class="abs" style="left:758px;top:723px;width:741px;height:62px;border-top:1px solid #d6d6d6;border-left:1px solid #d6d6d6;border-bottom:1px solid #d6d6d6"></div>
<div class="abs" style="left:761px;top:726px;width:147px;height:25px;background:#e3e3e3"></div>
<div class="t" style="left:765px;top:733px;font-size:12px;color:#333">版本号</div>
<div class="abs" style="left:910px;top:726px;width:366px;height:25px;background:#e3e3e3"></div>
<div class="t" style="left:914px;top:733px;font-size:12px;color:#333">版本说明</div>
<div class="abs" style="left:1278px;top:726px;width:219px;height:25px;background:#e3e3e3"></div>
<div class="t" style="left:1282px;top:733px;font-size:12px;color:#333">系统参数</div>
<div class="abs" style="left:761px;top:781px;width:147px;height:1px;background:#d0d0d0"></div>
<div class="abs" style="left:910px;top:781px;width:366px;height:1px;background:#d0d0d0"></div>
<div class="abs" style="left:1278px;top:781px;width:219px;height:1px;background:#d0d0d0"></div>
<div class="abs" style="left:907px;top:753px;width:1px;height:29px;background:#d6d6d6"></div>
<div class="abs" style="left:1275px;top:753px;width:1px;height:29px;background:#d6d6d6"></div>
<div class="abs" style="left:1496px;top:753px;width:1px;height:29px;background:#d6d6d6"></div>
<div class="abs" style="left:765px;top:753px;width:138px;height:28px;border:1px solid #dde1e8;border-radius:3px;background:#f4f6fa"></div>
<div class="t" style="left:772px;top:761px;font-size:12px;color:#999">V1.0</div>
<div class="abs" style="left:914px;top:753px;width:357px;height:28px;border:1px solid #dde1e8;border-radius:3px;background:#fff"></div>
<div class="t" style="left:920px;top:763px;font-size:12px;color:#000">初始版本</div>
<div class="abs" style="left:1282px;top:753px;width:210px;height:28px;border:1px solid #dde1e8;border-radius:3px;background:#fff"></div>
<div class="t" style="left:1287px;top:762px;font-size:12px;color:#000">IP,PORT</div>
<div class="abs" style="left:760px;top:787px;width:497px;height:90px;border:1px solid #cfcfcf;background:#fff"></div>
<div class="abs" style="left:1911px;top:477px;width:9px;height:388px;background:#f3f3f3"></div>
<div class="abs" style="left:1912px;top:478px;width:7px;height:274px;border-radius:4px;background:#bdc6d3"></div>
<div class="abs" style="left:260px;top:865px;width:1660px;height:50px;background:#f8f8f8;border-top:1px solid #e2e2e2"></div>
<div class="abs" style="left:1012px;top:876px;width:66px;height:30px;border-radius:3px;background:#1f83e8"></div>
<div class="t" style="left:1033px;top:886px;font-size:12px;color:#fff">确定</div>
<div class="abs" style="left:1092px;top:876px;width:66px;height:30px;border-radius:3px;background:#9b9b9b"></div>
<div class="t" style="left:1113px;top:886px;font-size:12px;color:#fff">取消</div>
<div class="abs" style="left:1353px;top:1px;width:153px;height:43px;border:3px solid #ed1c24"></div>
<div class="abs" style="left:52px;top:40px;width:145px;height:43px;border:3px solid #ed1c24"></div>
<div class="abs" style="left:52px;top:117px;width:185px;height:49px;border:3px solid #ed1c24"></div>
<div class="abs" style="left:257px;top:85px;width:88px;height:38px;border:3px solid #ed1c24"></div>
<div class="abs" style="left:670px;top:494px;width:354px;height:300px;border:3px solid #ed1c24"></div>
<div class="abs" style="left:991px;top:867px;width:99px;height:45px;border:3px solid #ed1c24"></div>
<svg class="abs" style="left:0;top:0" width="1920" height="915">
<path d="M509.0 53.5 L214.5 51.1" stroke="#ed1c24" stroke-width="3" stroke-linecap="round"/><path d="M204.0 51.0 L216.5 45.1 L211.5 51.1 L216.5 57.1 Z" fill="#ed1c24"/>
<path d="M477.0 115.0 L357.5 113.0" stroke="#ed1c24" stroke-width="3" stroke-linecap="round"/><path d="M347.0 112.8 L359.6 107.0 L354.5 112.9 L359.4 119.0 Z" fill="#ed1c24"/>
<path d="M428.5 190.0 L252.3 153.7" stroke="#ed1c24" stroke-width="3" stroke-linecap="round"/><path d="M242.0 151.6 L255.5 148.2 L249.3 153.1 L253.0 160.0 Z" fill="#ed1c24"/>
</svg>
<div class="t red" style="left:1299px;top:64px">1、切换至集团管理员</div>
<div class="t red" style="left:528px;top:50px">2、进入CIP集成平台菜单</div>
<div class="t red" style="left:440px;top:192px">3、进入第三方应用配置页签</div>
<div class="t red" style="left:488px;top:107px">4、点击新建</div>
<div class="t red" style="left:614px;top:810px">5、根据实际情况录入以上信息</div>
<div class="t red" style="left:1106px;top:847px">6、确定保存</div>
</body></html>
